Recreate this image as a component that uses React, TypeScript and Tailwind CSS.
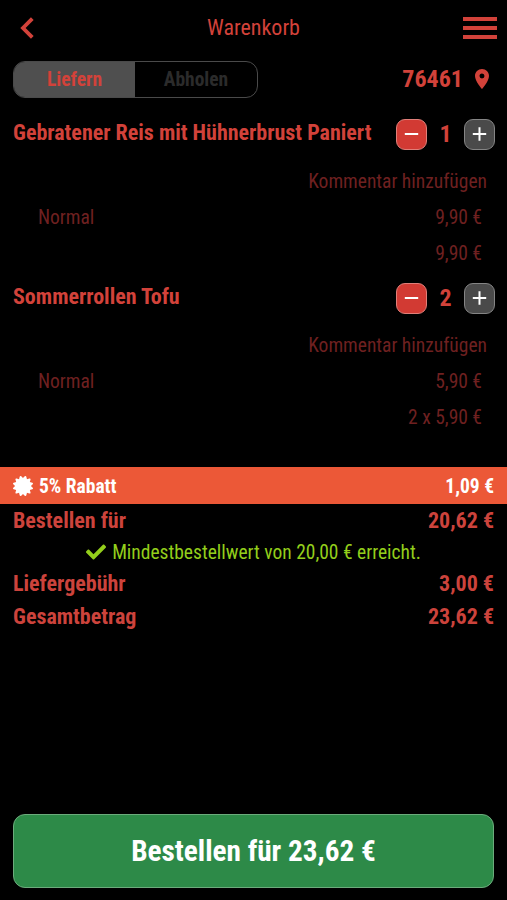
import { FaCheck, FaCertificate } from "react-icons/fa";
import { MdLocationOn } from "react-icons/md";

const ITEMS = [
  { name: "Gebratener Reis mit Hühnerbrust Paniert", count: 1, price: "9,90 €", total: "9,90 €" },
  { name: "Sommerrollen Tofu", count: 2, price: "5,90 €", total: "2 x 5,90 €" },
];

const Stepper = ({ count }: { count: number }) => (
  <div className="flex items-center">
    <button className="flex size-[31px] items-center justify-center rounded-[9px] border border-[#e07f79] bg-[#d23a33]">
      <svg width="15" height="15" viewBox="0 0 15 15" stroke="white" strokeWidth="2">
        <path d="M0.8 7h13.4" />
      </svg>
    </button>
    <span className="w-[37px] text-center text-[24px] font-bold">{count}</span>
    <button className="flex size-[31px] items-center justify-center rounded-[9px] border border-[#858585] bg-[#4a4a4a]">
      <svg width="15" height="15" viewBox="0 0 15 15" stroke="white" strokeWidth="2">
        <path d="M0.8 7h13.4M7.5 0.3v13.4" />
      </svg>
    </button>
  </div>
);

export default function App() {
  return (
    <div className="flex h-[900px] w-full flex-col overflow-hidden bg-black font-['Roboto_Condensed',Roboto,sans-serif] leading-none text-[#d2423a] [font-stretch:75%]">
      <header className="flex h-14 items-center justify-between px-[10px]">
        <svg width="34" height="22" viewBox="0 0 34 22" fill="none" stroke="currentColor" strokeWidth="3.8">
          <path d="M22.3 1.7L13 11l9.3 9.3" />
        </svg>
        <h1 className="text-[22px]">Warenkorb</h1>
        <svg width="34" height="24" viewBox="0 0 34 24" fill="currentColor">
          <path d="M0 1h34v4H0zM0 10h34v4H0zM0 19h34v4H0z" />
        </svg>
      </header>

      <div className="flex h-[46px] items-center justify-between px-[13px]">
        <div className="flex h-[37px] w-[245px] overflow-hidden rounded-xl border border-[#4a4a4a] text-[19.5px] font-bold">
          <div className="flex w-[121px] items-center justify-center bg-[#4f4f4f] pt-0.5">Liefern</div>
          <div className="flex flex-1 items-center justify-center pt-0.5 text-[#2b2b2b]">Abholen</div>
        </div>
        <div className="flex items-center gap-[7px] text-[24px] font-bold">
          76461
          <MdLocationOn size={24} />
        </div>
      </div>

      {ITEMS.map((item) => (
        <section key={item.name} className="h-[164px] pl-[13px] pr-3 pt-4">
          <div className="flex h-8 items-center justify-between">
            <h2 className="whitespace-nowrap pb-0.5 text-[22px] font-bold">{item.name}</h2>
            <Stepper count={item.count} />
          </div>
          <div className="flex flex-col pl-[25px] pr-[13px] pt-3.5 text-[19.5px] text-[#6f2020]">
            <div className="-mr-[5px] flex h-9 items-center justify-end">Kommentar hinzufügen</div>
            <div className="flex h-9 items-center justify-between">
              <span>Normal</span>
              <span>{item.price}</span>
            </div>
            <div className="flex h-9 items-center justify-end">{item.total}</div>
          </div>
        </section>
      ))}

      <div className="mt-[37px] flex h-[37px] items-center bg-[#ec5837] px-[13px] text-[19.5px] font-bold text-white">
        <FaCertificate size={20} />
        <span className="ml-1.5 flex-1 pt-0.5">5% Rabatt</span>
        <span className="pt-0.5">1,09 €</span>
      </div>
      <div className="flex h-[34px] items-center justify-between px-[13px] text-[22px] font-bold text-[#cc433c]">
        <span>Bestellen für</span>
        <span>20,62 €</span>
      </div>
      <div className="flex h-[29px] items-center justify-center gap-1.5 pb-0.5 text-[19.5px] text-[#93ce1b]">
        <FaCheck size={20} />
        <span className="pt-0.5">Mindestbestellwert von 20,00 € erreicht.</span>
      </div>
      <div className="flex h-[33px] items-center justify-between px-[13px] text-[22px] font-bold text-[#cc433c]">
        <span>Liefergebühr</span>
        <span>3,00 €</span>
      </div>
      <div className="flex h-[33px] items-center justify-between px-[13px] text-[22px] font-bold text-[#cc433c]">
        <span>Gesamtbetrag</span>
        <span>23,62 €</span>
      </div>

      <button className="mx-[13px] mb-3 mt-auto h-[74px] rounded-xl border border-[#6cab7c] bg-[#2d8a48] pt-0.5 text-[29.25px] font-bold text-white">
        Bestellen für 23,62 €
      </button>
    </div>
  );
}
